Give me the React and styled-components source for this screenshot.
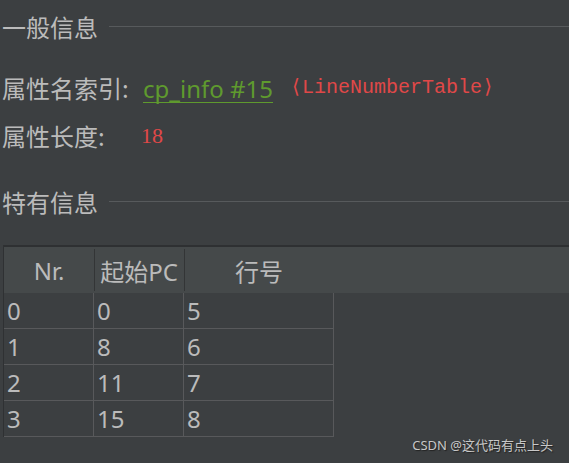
import React from 'react'
import styled, { createGlobalStyle } from 'styled-components'

const GlobalStyle = createGlobalStyle`
    html, body {
        margin: 0;
        padding: 0;
        background-color: #3c3f41;
    }
    body {
        font-family: "Noto Sans", "Noto Sans CJK SC", sans-serif;
        color: #bbbbbb;
    }
`

const Page = styled.div`
    position: relative;
    width: 569px;
    height: 463px;
    overflow: hidden;
    background-color: #3c3f41;
    padding-left: 2px;
    box-sizing: border-box;
`

const SectionTitle = styled.div`
    display: flex;
    align-items: center;
    gap: 11px;
    height: 30px;
    margin-top: ${props => props.top}px;
    font-size: 24px;
    line-height: 30px;
    font-family: "Noto Sans CJK SC", sans-serif;
    color: #bbbbbb;

    &::after {
        content: "";
        flex: 1;
        height: 1px;
        margin-top: -2px;
        background-color: #575a5c;
    }
`

const Field = styled.div`
    display: flex;
    align-items: center;
    height: 30px;
    margin-top: ${props => props.top}px;
    font-size: 24px;
    line-height: 30px;
`

const Label = styled.span`
    font-family: "Noto Sans CJK SC", sans-serif;
    width: ${props => props.width}px;
    flex: none;
`

const Link = styled.span`
    color: #5f9a2e;
    font-family: "Noto Sans", sans-serif;
    font-size: 24px;
    border-bottom: 1px solid #5f9a2e;
    line-height: 27px;
    margin-top: 2px;
`

const Tag = styled.span`
    color: #e04848;
    font-family: "Liberation Mono", monospace;
    font-size: 20px;
    margin-left: 17px;
`

const Value = styled.span`
    color: #e04848;
    font-family: "Liberation Serif", serif;
    font-size: 22px;
`

const Table = styled.div`
    margin-top: 28px;
    margin-left: 1px;
    border-left: 1px solid #2f3133;
`

const HeaderRow = styled.div`
    display: grid;
    grid-template-columns: 90px 90px 150px 1fr;
    height: 48px;
    background-color: #45494a;
    border-top: 2px solid #2e3032;
    box-sizing: border-box;
`

const HeaderCell = styled.div`
    display: flex;
    align-items: center;
    justify-content: center;
    font-size: 24px;
    font-family: "Noto Sans", "Noto Sans CJK SC", sans-serif;
    color: #bbbbbb;
    position: relative;

    &::before {
        content: "";
        display: ${props => props.divider ? 'block' : 'none'};
        position: absolute;
        left: 0;
        top: 2px;
        bottom: 2px;
        width: 1px;
        background-color: #333536;
    }
`

const Body = styled.div`
    width: 330px;
`

const Row = styled.div`
    display: grid;
    grid-template-columns: 90px 90px 150px;
    height: 36px;
    border-bottom: 1px solid #58595b;
    box-sizing: border-box;
`

const Cell = styled.div`
    display: flex;
    align-items: center;
    padding-left: 3px;
    border-right: 1px solid #58595b;
    font-size: 24px;
    font-family: "Noto Sans", sans-serif;
    color: #bbbbbb;
`

const Watermark = styled.div`
    position: absolute;
    right: 16px;
    bottom: 9px;
    font-size: 13px;
    font-family: "Noto Sans", "Noto Sans CJK SC", sans-serif;
    color: #c8c8c8;
    text-shadow: 1px 1px 1px #222;
`

const rows = [
    [0, 0, 5],
    [1, 8, 6],
    [2, 11, 7],
    [3, 15, 8],
]

const App = () => {
    return (
        <Page>
            <GlobalStyle />
            <SectionTitle top={12}>一般信息</SectionTitle>
            <Field top={31}>
                <Label width={141}>属性名索引:</Label>
                <Link>cp_info #15</Link>
                <Tag>⟨LineNumberTable⟩</Tag>
            </Field>
            <Field top={18}>
                <Label width={139}>属性长度:</Label>
                <Value>18</Value>
            </Field>
            <SectionTitle top={36}>特有信息</SectionTitle>
            <Table>
                <HeaderRow>
                    <HeaderCell>Nr.</HeaderCell>
                    <HeaderCell divider>起始PC</HeaderCell>
                    <HeaderCell divider>行号</HeaderCell>
                    <HeaderCell />
                </HeaderRow>
                <Body>
                    {rows.map(r => (
                        <Row key={r[0]}>
                            {r.map((v, i) => (
                                <Cell key={i}>{v}</Cell>
                            ))}
                        </Row>
                    ))}
                </Body>
            </Table>
            <Watermark>CSDN @这代码有点上头</Watermark>
        </Page>
    )
}

export default App
